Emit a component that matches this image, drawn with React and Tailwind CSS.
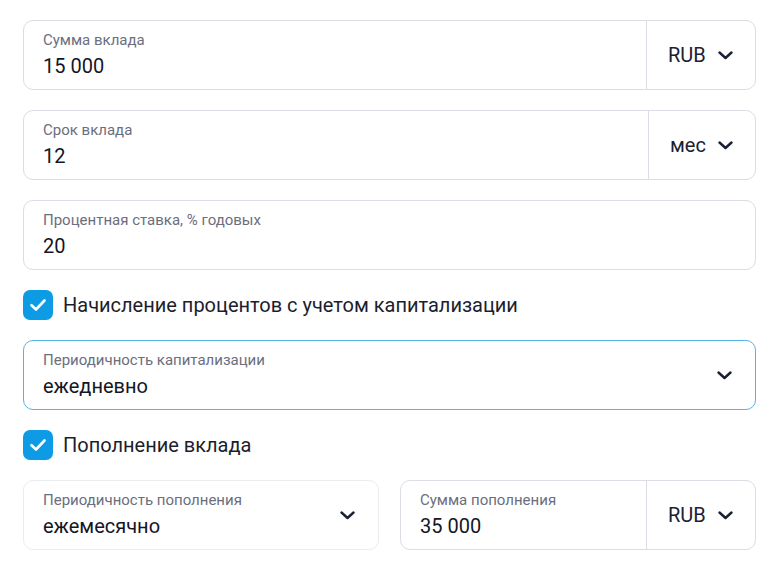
import React from "react";

function Chevron() {
  return (
    <svg width="15" height="9" viewBox="0 0 15 9" fill="none" className="shrink-0">
      <path
        d="M1.5 1.5L7.5 7L13.5 1.5"
        stroke="#1c2033"
        strokeWidth="2.4"
        strokeLinecap="round"
        strokeLinejoin="round"
      />
    </svg>
  );
}

function Unit({ label, wide }) {
  return (
    <div
      className={`flex items-center gap-[12px] border-l border-[#dcdce4] pl-[21px] pr-[23px] ${
        wide ? "w-[107px]" : "w-[109px]"
      }`}
    >
      <span className="text-[20px] text-[#1c2033]">{label}</span>
      <Chevron />
    </div>
  );
}

function Field({ label, value, unit, select, active, light, unitWide }) {
  const border = active
    ? "border-[#55b4e8]"
    : light
      ? "border-[#ececf0]"
      : "border-[#dcdce4]";
  return (
    <div className={`flex h-[70px] rounded-[10px] border bg-white ${border}`}>
      <div className="flex-1 min-w-0 pl-[19px] pt-[9px]">
        <div className="text-[15px] leading-[21px] text-[#6b6e7e]">{label}</div>
        <div className="text-[20px] leading-[27px] text-[#141625] mt-[2px]">
          {value}
        </div>
      </div>
      {select && (
        <div className="flex items-center pr-[23px]">
          <Chevron />
        </div>
      )}
      {unit && <Unit label={unit} wide={unitWide} />}
    </div>
  );
}

function Check({ label }) {
  return (
    <label className="flex items-center gap-[10px] h-[30px]">
      <span className="flex items-center justify-center w-[30px] h-[30px] rounded-[7px] bg-[#0d9be6]">
        <svg width="18" height="14" viewBox="0 0 18 14" fill="none">
          <path
            d="M2.5 7.2L7 11.5L15.5 2.5"
            stroke="white"
            strokeWidth="2.6"
            strokeLinecap="round"
            strokeLinejoin="round"
          />
        </svg>
      </span>
      <span className="text-[20px] text-[#1c1e2e]">{label}</span>
    </label>
  );
}

export default function App() {
  return (
    <div
      className="w-[779px] h-[574px] bg-white px-[23px] pt-[20px] flex flex-col"
      style={{ fontFamily: "Roboto, 'Liberation Sans', sans-serif" }}
    >
      <Field label="Сумма вклада" value="15 000" unit="RUB" />
      <div className="h-[20px]" />
      <Field label="Срок вклада" value="12" unit="мес" unitWide />
      <div className="h-[20px]" />
      <Field label="Процентная ставка, % годовых" value="20" />
      <div className="h-[20px]" />
      <Check label="Начисление процентов с учетом капитализации" />
      <div className="h-[20px]" />
      <Field label="Периодичность капитализации" value="ежедневно" select active />
      <div className="h-[20px]" />
      <Check label="Пополнение вклада" />
      <div className="h-[20px]" />
      <div className="grid grid-cols-2 gap-[21px]">
        <Field label="Периодичность пополнения" value="ежемесячно" select light />
        <Field label="Сумма пополнения" value="35 000" unit="RUB" />
      </div>
    </div>
  );
}
